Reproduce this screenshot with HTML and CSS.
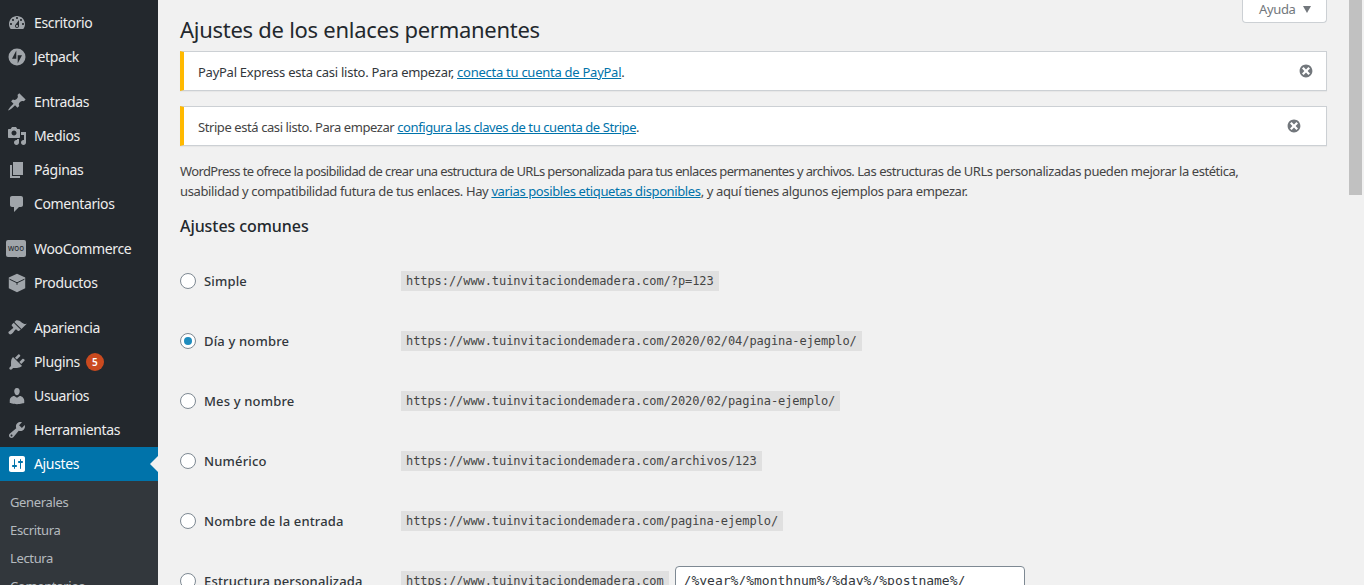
FILE: index.html
```html
<!DOCTYPE html>
<html lang="es">
<head>
<meta charset="utf-8">
<title>Ajustes de los enlaces permanentes</title>
<link rel="stylesheet" href="styles.css">
</head>
<body>
<div class="app">
<nav class="sidebar">
  <ul class="menu">
    <li class="item"><svg class="ic" viewBox="0 0 20 20"><path d="M3.76 16h12.48c1.1-1.37 1.76-3.11 1.76-5 0-4.42-3.58-8-8-8s-8 3.58-8 8c0 1.89.66 3.63 1.76 5zM10 4c.55 0 1 .45 1 1s-.45 1-1 1-1-.45-1-1 .45-1 1-1zM6 6c.55 0 1 .45 1 1s-.45 1-1 1-1-.45-1-1 .45-1 1-1zm8 0c.55 0 1 .45 1 1s-.45 1-1 1-1-.45-1-1 .45-1 1-1zm-5.37 5.55L12 7v6c0 1.1-.9 2-2 2s-2-.9-2-2c0-.57.24-1.08.63-1.45zM4 10c.55 0 1 .45 1 1s-.45 1-1 1-1-.45-1-1 .45-1 1-1zm12 0c.55 0 1 .45 1 1s-.45 1-1 1-1-.45-1-1 .45-1 1-1zm-5 3c0-.55-.45-1-1-1s-1 .45-1 1 .45 1 1 1 1-.45 1-1z"/></svg><span class="label">Escritorio</span></li>
    <li class="item"><svg class="ic" viewBox="0 0 20 20"><path fill-rule="evenodd" d="M10 1.5a8.500 8.500 0 1 1 0 17 8.500 8.500 0 0 1 0-17zM9.300 3.500 5 11.700h4.300zM10.700 16.500l4.300-8.200h-4.300z"/></svg><span class="label">Jetpack</span></li>
    <li class="item sep"><svg class="ic" viewBox="0 0 20 20"><path d="M10.44 3.02l1.82-1.82 6.36 6.35-1.83 1.82c-1.05-.68-2.48-.57-3.41.36l-.75.75c-.92.93-1.04 2.35-.35 3.41l-1.83 1.82-2.41-2.41-2.8 2.79c-.42.42-3.38 2.71-3.8 2.29s1.86-3.39 2.28-3.81l2.79-2.79L4.1 9.36l1.83-1.82c1.05.69 2.48.57 3.4-.36l.75-.75c.93-.92 1.05-2.35.36-3.41z"/></svg><span class="label">Entradas</span></li>
    <li class="item"><svg class="ic" viewBox="0 0 20 20"><path d="M13 11V4c0-.55-.45-1-1-1h-1.67L9 1H5L3.67 3H2c-.55 0-1 .45-1 1v7c0 .55.45 1 1 1h10c.55 0 1-.45 1-1zM7 4.500c1.38 0 2.500 1.120 2.500 2.500S8.380 9.500 7 9.500 4.500 8.380 4.500 7 5.620 4.500 7 4.500zM14 6h5v10.500c0 1.380-1.120 2.500-2.500 2.500S14 17.880 14 16.500s1.120-2.500 2.500-2.500c.17 0 .34.02.5.05V9h-3V6zm-4 8.050V13h2v3.500c0 1.380-1.120 2.500-2.500 2.500S7 17.880 7 16.500 8.120 14 9.500 14c.17 0 .34.02.5.05z"/></svg><span class="label">Medios</span></li>
    <li class="item"><svg class="ic" viewBox="0 0 20 20"><path d="M6 15V2h10v13H6zm-1 1h8v2H3V5h2v11z"/></svg><span class="label">Páginas</span></li>
    <li class="item"><svg class="ic" viewBox="0 0 20 20"><path d="M5 2h9c1.1 0 2 .9 2 2v7c0 1.1-.9 2-2 2h-2l-5 5v-5H5c-1.1 0-2-.9-2-2V4c0-1.1.9-2 2-2z"/></svg><span class="label">Comentarios</span></li>
    <li class="item sep"><span class="woo"><span class="woo-text">woo</span></span><span class="label">WooCommerce</span></li>
    <li class="item"><svg class="ic" viewBox="0 0 20 20"><path d="M10 .8l8.200 3.600v10.800L10 19.200l-8.200-4V4.400z"/><path class="box-line" d="M2.500 6.200 10 9.800l7.500-3.600M10 9.800v2"/></svg><span class="label">Productos</span></li>
    <li class="item sep"><svg class="ic" viewBox="0 0 20 20"><path d="M14.48 11.06L7.41 3.99l1.5-1.5c.5-.56 2.3-.47 3.51.32 1.21.8 1.43 1.28 2.91 2.1 1.18.64 2.45 1.26 4.45.85zm-.71.71L6.7 4.7 4.93 6.47c-.39.39-.39 1.02 0 1.41l1.06 1.06c.39.39.39 1.03 0 1.42-.6.6-1.43 1.11-2.21 1.69-.35.26-.7.53-1.01.84C1.43 13.23.91 14.52 2 15.82c1.1 1.09 2.38.58 3.72-.84.29-.3.56-.64.84-1.01.58-.78 1.09-1.61 1.69-2.21.39-.39 1.02-.39 1.41 0l1.07 1.06c.39.39 1.02.39 1.41 0z"/></svg><span class="label">Apariencia</span></li>
    <li class="item"><svg class="ic" viewBox="0 0 20 20"><path d="M13.11 4.36L9.87 7.6 8 5.73l3.24-3.24c.35-.34 1.05-.2 1.56.32.52.51.66 1.21.31 1.55zm-8 1.77l.91-1.12 9.01 9.01-1.19.84c-.71.71-2.63 1.16-3.82 1.16H6.14L4.9 17.26c-.59.59-1.54.59-2.12 0-.59-.58-.59-1.53 0-2.12l1.24-1.24v-3.88c0-1.13.4-3.19 1.09-3.89zm7.26 3.97l3.24-3.24c.34-.35 1.04-.21 1.55.31.52.51.66 1.21.31 1.55l-3.24 3.25z"/></svg><span class="label">Plugins</span><span class="badge">5</span></li>
    <li class="item"><svg class="ic" viewBox="0 0 20 20"><path d="M10 9.25c-2.27 0-2.73-3.44-2.73-3.44C7 4.02 7.82 2 9.97 2c2.16 0 2.98 2.02 2.71 3.81 0 0-.41 3.44-2.68 3.44zm0 2.57L12.72 10c2.39 0 4.52 2.33 4.52 4.53v2.49s-3.65 1.13-7.24 1.13c-3.65 0-7.24-1.13-7.24-1.13v-2.49c0-2.25 1.94-4.48 4.47-4.48z"/></svg><span class="label">Usuarios</span></li>
    <li class="item"><svg class="ic" viewBox="0 0 20 20"><path d="M16.68 9.77c-1.34 1.34-3.3 1.67-4.95.99l-5.41 6.52c-.99.99-2.59.99-3.58 0s-.99-2.59 0-3.57l6.52-5.42c-.68-1.65-.35-3.61.99-4.95 1.28-1.28 3.12-1.62 4.72-1.06l-2.89 2.89 2.82 2.82 2.86-2.87c.53 1.58.18 3.39-1.08 4.65zM3.81 16.21c.4.39 1.04.39 1.43 0 .4-.4.4-1.04 0-1.43-.39-.4-1.03-.4-1.43 0-.39.39-.39 1.03 0 1.43z"/></svg><span class="label">Herramientas</span></li>
    <li class="item current"><svg class="ic" viewBox="0 0 20 20"><path d="M18 16V4c0-1.1-.9-2-2-2H4c-1.1 0-2 .9-2 2v12c0 1.1.9 2 2 2h12c1.1 0 2-.9 2-2zM8 11h1c.55 0 1 .45 1 1s-.45 1-1 1H8v1.5c0 .28-.22.5-.5.5s-.5-.22-.5-.5V13H6c-.55 0-1-.45-1-1s.45-1 1-1h1V5.500c0-.28.22-.5.5-.5s.5.22.5.5V11zm5-2h-1c-.55 0-1-.45-1-1s.45-1 1-1h1V5.500c0-.28.22-.5.5-.5s.5.22.5.5V7h1c.55 0 1 .45 1 1s-.45 1-1 1h-1v5.500c0 .28-.22.5-.5.5s-.5-.22-.5-.5V9z"/></svg><span class="label">Ajustes</span></li>
  </ul>
  <ul class="submenu">
    <li>Generales</li>
    <li>Escritura</li>
    <li>Lectura</li>
    <li>Comentarios</li>
  </ul>
</nav>
<main class="main">
  <header class="head">
    <h1 class="title">Ajustes de los enlaces permanentes</h1>
    <div class="help">Ayuda<span class="caret"></span></div>
  </header>
  <div class="notice notice-paypal"><p>PayPal Express esta casi listo. Para empezar, <a href="#">conecta tu cuenta de PayPal</a>.</p><svg class="dismiss" viewBox="0 0 20 20"><path d="M10 2c4.42 0 8 3.58 8 8s-3.58 8-8 8-8-3.58-8-8 3.58-8 8-8zm5 11l-3-3 3-3-2-2-3 3-3-3-2 2 3 3-3 3 2 2 3-3 3 3z"/></svg></div>
  <div class="notice notice-stripe"><p>Stripe está casi listo. Para empezar <a href="#">configura las claves de tu cuenta de Stripe</a>.</p><svg class="dismiss" viewBox="0 0 20 20"><path d="M10 2c4.42 0 8 3.58 8 8s-3.58 8-8 8-8-3.58-8-8 3.58-8 8-8zm5 11l-3-3 3-3-2-2-3 3-3-3-2 2 3 3-3 3 2 2 3-3 3 3z"/></svg></div>
  <p class="intro"><span class="s1">WordPress te ofrece la posibilidad de crear una estructura de URLs personalizada para tus enlaces permanentes y archivos.</span> <span class="s2">Las estructuras de URLs personalizadas pueden mejorar la estética,</span><br>usabilidad y compatibilidad futura de tus enlaces. Hay <a href="#">varias posibles etiquetas disponibles</a>, y aquí tienes algunos ejemplos para empezar.</p>
  <h2 class="subtitle">Ajustes comunes</h2>
  <div class="options">
    <div class="row"><label class="opt"><span class="radio"></span>Simple</label><code>https://www.tuinvitaciondemadera.com/?p=123</code></div>
    <div class="row"><label class="opt"><span class="radio checked"></span>Día y nombre</label><code>https://www.tuinvitaciondemadera.com/2020/02/04/pagina-ejemplo/</code></div>
    <div class="row"><label class="opt"><span class="radio"></span>Mes y nombre</label><code>https://www.tuinvitaciondemadera.com/2020/02/pagina-ejemplo/</code></div>
    <div class="row"><label class="opt"><span class="radio"></span>Numérico</label><code>https://www.tuinvitaciondemadera.com/archivos/123</code></div>
    <div class="row"><label class="opt"><span class="radio"></span>Nombre de la entrada</label><code>https://www.tuinvitaciondemadera.com/pagina-ejemplo/</code></div>
    <div class="row"><label class="opt"><span class="radio"></span>Estructura personalizada</label><code>https://www.tuinvitaciondemadera.com</code><span class="field">/%year%/%monthnum%/%day%/%postname%/</span></div>
  </div>
</main>
<div class="scrollbar"><div class="thumb"></div></div>
</div>
</body>
</html>
```

FILE: styles.css
```css
* { box-sizing: border-box; }
html, body { margin: 0; height: 585px; overflow: hidden; }
body { background: #f1f1f1; color: #444; font: 13px/20px "Noto Sans", sans-serif; }
ul { list-style: none; margin: 0; padding: 0; }
a { color: #0073aa; }
.app { display: flex; height: 585px; overflow: hidden; }

.sidebar { flex: 0 0 158px; background: #23282d; padding-top: 6px; color: #eee; font-size: 14px; letter-spacing: -.35px; }
.item { display: flex; align-items: center; height: 34px; padding-left: 7px; }
.item.sep { margin-top: 11px; }
.ic { flex: none; width: 20px; height: 20px; margin-right: 7px; fill: #a0a5aa; }
.box-line { fill: none; stroke: #23282d; stroke-width: 1; }
.current { position: relative; background: #0073aa; color: #fff; }
.current .ic { fill: #fff; }
.current::after { content: ""; position: absolute; right: 0; top: 9px; border: 8px solid transparent; border-right-color: #f1f1f1; border-left-width: 0; }
.woo { flex: none; display: flex; align-items: center; justify-content: center; width: 20px; height: 17px; margin-right: 7px; margin-left: -1px; margin-top: -2px; border-radius: 2px; background: #a0a5aa; position: relative; }
.woo + .label { margin-left: 1px; }
.woo::after { content: ""; position: absolute; left: 10px; bottom: -3px; border: 2px solid transparent; border-top-color: #a0a5aa; }
.woo-text { color: #23282d; font-size: 8px; line-height: 10px; letter-spacing: 0; }
.badge { width: 18px; height: 18px; margin-left: 6px; border-radius: 50%; background: #ca4a1f; color: #fff; font-size: 10px; font-weight: 600; line-height: 18px; text-align: center; letter-spacing: 0; }
.submenu { background: #32373c; padding-top: 7px; color: rgba(240,245,250,.7); font-size: 13px; letter-spacing: -.35px; }
.submenu li { height: 28px; line-height: 28px; padding-left: 10px; }

.main { flex: 1; min-width: 0; padding: 0 22px; background: #f1f1f1; }
.head { display: flex; justify-content: space-between; align-items: flex-start; height: 51px; }
.title { margin: 0; padding-top: 14px; font-size: 22px; font-weight: 400; line-height: 31px; color: #23282d; letter-spacing: -.27px; }
.help { display: flex; align-items: center; width: 85px; height: 24px; margin-top: -1px; padding: 0 0 3px 16px; background: #fff; border: 1px solid #ccd0d4; border-top: 0; border-radius: 0 0 4px 4px; color: #72777c; font-size: 13px; letter-spacing: -.35px; }
.caret { margin-left: 7px; border: 4.500px solid transparent; border-top: 7px solid #72777c; border-bottom: 0; }
.notice { display: flex; justify-content: space-between; align-items: center; height: 40px; margin-bottom: 15px; padding: 2px 12px 0 14px; background: #fff; border: 1px solid #ccd0d4; border-left: 4px solid #ffb900; color: #32373c; box-shadow: 0 1px 1px rgba(0,0,0,.04); }
.notice-paypal { letter-spacing: -.26px; }
.notice-stripe { padding-right: 24px; letter-spacing: -.42px; color: #444; }
.notice p { margin: 0; }
.dismiss { width: 16px; height: 16px; margin-top: -2px; fill: #72777c; }
.intro { margin: 15px 0 0; letter-spacing: -.38px; }
.s1 { letter-spacing: -.63px; }
.s2 { letter-spacing: -.45px; }
.subtitle { margin: 13px 0 0; font-size: 16px; font-weight: 500; line-height: 25px; color: #23282d; letter-spacing: -.07px; }
.options { margin-top: 12px; }
.row { display: flex; align-items: center; height: 60px; }
.opt { flex: 0 0 221px; display: flex; align-items: center; font-size: 13px; font-weight: 500; color: #32373c; letter-spacing: .16px; }
.radio { flex: none; width: 16px; height: 16px; margin-right: 8px; border: 1px solid #7e8993; border-radius: 50%; background: #fff; }
.checked { display: flex; align-items: center; justify-content: center; }
.checked::before { content: ""; width: 8px; height: 8px; border-radius: 50%; background: #1e8cbe; }
code { height: 20px; padding: 0 5px; background: rgba(0,0,0,.07); color: #444; font: 12px/21px "DejaVu Sans Mono", monospace; letter-spacing: -.07px; white-space: nowrap; }
.field { flex: none; width: 350px; height: 30px; margin-left: 6px; padding: 0 8px; background: #fff; border: 1px solid #7e8993; border-radius: 4px; color: #32373c; font: 13px/28px "DejaVu Sans Mono", monospace; }

.scrollbar { flex: 0 0 15px; padding-right: 2px; background: #f1f1f1; }
.thumb { height: 195px; background: #c1c1c1; }
```
